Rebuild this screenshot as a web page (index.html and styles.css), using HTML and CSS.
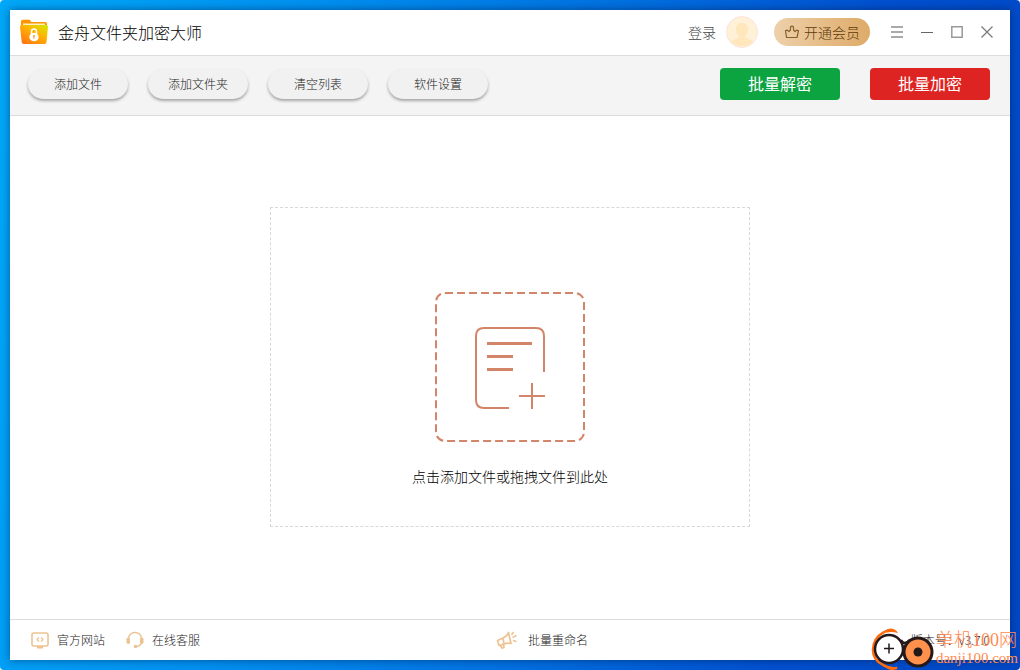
FILE: index.html
```html
<!DOCTYPE html>
<html lang="zh-CN">
<head>
<meta charset="utf-8">
<meta name="viewport" content="width=device-width, initial-scale=1">
<title>金舟文件夹加密大师</title>
<link rel="stylesheet" href="styles.css">
</head>
<body>
<div class="window">
  <header class="titlebar">
    <svg class="logo" viewBox="0 0 28 26" aria-hidden="true">
      <defs>
        <linearGradient id="front" x1="1" y1="0" x2="0.2" y2="1">
          <stop offset="0" stop-color="#d2ea00"/><stop offset="0.45" stop-color="#ffb400"/><stop offset="1" stop-color="#ff7614"/>
        </linearGradient>
      </defs>
      <path fill="#ff9500" d="M1 2.500Q1 0.800 2.600 0.800H9Q10 0.800 10.700 2L11.300 3H25Q27 3 27 5V10H1z"/>
      <path fill="#fff0c4" d="M3 4.500H25V9H3z"/>
      <path fill="url(#front)" d="M0 7.500Q0 6 1.500 6H26.500Q28 6 28 7.500L26.500 23Q26.200 25 24.500 25H3.500Q2 25 1.700 23z"/>
      <path fill="none" stroke="#fff" stroke-width="1.500" d="M11.500 15V12.500Q11.500 10 14 10Q16.500 10 16.500 12.500V15"/>
      <ellipse cx="14" cy="18" rx="4.700" ry="4.300" fill="#fff"/>
      <path fill="#ffa030" d="M14 16a1 1 0 0 1 .5 1.900V20h-1V17.900a1 1 0 0 1 .5-1.900z"/>
    </svg>
    <h1 class="title">金舟文件夹加密大师</h1>
    <a class="login" href="#">登录</a>
    <svg class="avatar" viewBox="0 0 32 32" aria-hidden="true">
      <circle cx="16" cy="16" r="15.500" fill="#fff0d8" stroke="#fde3dc"/>
      <path fill="#ffe6bb" d="M16 7c4 0 6 2.500 6 6 0 3-1 5-3 7v1.500l6 2.500c1 .5 1.500 1 1.500 2C23 29 20 30 16 30S9 29 5.500 26c0-1 .5-1.500 1.500-2l6-2.500V20c-2-2-3-4-3-7 0-3.500 2-6 6-6z"/>
    </svg>
    <button class="vip" type="button">
      <svg class="crown" viewBox="0 0 16 14" aria-hidden="true">
        <path fill="none" stroke="#87602c" stroke-width="1.200" stroke-linejoin="round" d="M2.500 12.500L1.500 5.500L3.500 5.200L5 6.500L6.500 5V2Q8 0.200 9.500 2V5L11 6.500L12.500 5.200L14.500 5.500L13 12.500z"/>
      </svg>
      <span>开通会员</span>
    </button>
    <div class="controls">
      <button class="control" type="button" aria-label="菜单"><svg viewBox="0 0 14 14"><path stroke="#aaa" stroke-width="2" d="M1 2H13M1 7H13M1 12H13"/></svg></button>
      <button class="control" type="button" aria-label="最小化"><svg viewBox="0 0 14 14"><path stroke="#666" d="M1 7.500H13"/></svg></button>
      <button class="control" type="button" aria-label="最大化"><svg viewBox="0 0 14 14"><path fill="none" stroke="#999" stroke-width="1.500" d="M1.800 1.800H12.200V12.200H1.800z"/></svg></button>
      <button class="control" type="button" aria-label="关闭"><svg viewBox="0 0 14 14"><path stroke="#777" stroke-width="1.200" d="M1.500 1.500L12.500 12.500M12.500 1.500L1.500 12.500"/></svg></button>
    </div>
  </header>

  <nav class="toolbar">
    <button class="pill" type="button">添加文件</button>
    <button class="pill" type="button">添加文件夹</button>
    <button class="pill" type="button">清空列表</button>
    <button class="pill" type="button">软件设置</button>
    <div class="actions">
      <button class="action decrypt" type="button">批量解密</button>
      <button class="action encrypt" type="button">批量加密</button>
    </div>
  </nav>

  <main class="workspace">
    <button class="dropzone" type="button">
      <svg class="add-file" viewBox="0 0 150 150" aria-hidden="true">
        <g fill="none" stroke="#d38569" stroke-width="2">
          <rect x="1" y="1" width="148" height="148" rx="9" stroke-dasharray="8 4"/>
          <path d="M74 116H49Q41 116 41 108V44Q41 36 49 36H101Q109 36 109 44V80M97 91V117M84 104H110"/>
          <path stroke-width="3" d="M52 51.500H97M52 64.500H78M52 77.500H78"/>
        </g>
      </svg>
      <span>点击添加文件或拖拽文件到此处</span>
    </button>
  </main>

  <footer class="statusbar">
    <div class="links">
      <a class="link" href="#">
        <svg class="link-icon" viewBox="0 0 20 18" aria-hidden="true">
          <rect x="2" y="2" width="16" height="13" rx="1.500" fill="none" stroke="#ecc391" stroke-width="1.600"/>
          <path fill="none" stroke="#ecc391" stroke-width="1.200" d="M9 6.500L7 8.500L9 10.500M11 6.500L13 8.500L11 10.500"/>
          <path fill="#ecc391" d="M7 15H13V17.500H7z"/>
        </svg>
        官方网站</a>
      <a class="link" href="#">
        <svg class="link-icon" viewBox="0 0 20 18" aria-hidden="true">
          <path fill="none" stroke="#ecc391" stroke-width="1.500" d="M3.500 9V7.500C3.500 4 6.500 1.500 10 1.500S16.500 4 16.500 7.500V9M16.500 12Q15.500 15 11 15.500"/>
          <rect x="1.500" y="6.500" width="3.500" height="6.500" rx="1.700" fill="#ecc391"/>
          <rect x="15" y="6.500" width="3.500" height="6.500" rx="1.700" fill="#ecc391"/>
          <circle cx="10.500" cy="15.500" r="1.800" fill="#ecc391"/>
        </svg>
        在线客服</a>
    </div>
    <a class="link rename" href="#">
      <svg class="horn" viewBox="0 0 22 18" aria-hidden="true">
        <path fill="none" stroke="#ecc391" stroke-width="1.700" stroke-linejoin="round" d="M1.500 9.500L7 7Q11 5.500 12.500 1.500L15 12.500Q11.500 11.500 8 13L3 14.500zM7 7L8 13M4.500 14.500L6 17.200L8 16.500L7.500 13.500"/>
        <path stroke="#ecc391" stroke-width="1.500" d="M15.500 4L17.500 1M16.500 6.500L20.500 4.500M17 9.500L20.500 10.500"/>
      </svg>
      批量重命名</a>
    <span class="version">版本号：v3.7.0</span>
  </footer>
</div>

<div class="watermark">
  <svg class="mark-logo" viewBox="0 0 66 44" aria-hidden="true">
    <path fill="none" stroke="#ff6a0a" stroke-width="2.500" d="M14 6Q3 12 3 24Q3 34 13 39Q19 43 27 42"/>
    <path fill="#ff6a0a" d="M10 9Q14 3 21 2.500Q26 3 28 7Q18 4 10 9zM12 37Q19 42 28 41Q26 44 21 44Q16 43 12 37z"/>
    <circle cx="19" cy="23" r="14" fill="#fff" stroke="#241819" stroke-width="2.500"/>
    <path stroke="#241819" stroke-width="1.500" d="M14 22.500H24M19 17.500V27.500"/>
    <circle cx="48" cy="26" r="14" fill="#ff914c" stroke="#241819" stroke-width="3"/>
    <circle cx="48" cy="26" r="4.500" fill="#241819"/>
    <path fill="none" stroke="#241819" stroke-width="2.500" d="M31 14Q34 20 40 14"/>
  </svg>
  <div class="mark-text"><span class="mark-name">单机100网</span><span class="mark-url">danji100.com</span></div>
</div>
</body>
</html>
```

FILE: styles.css
```css
* { box-sizing: border-box; }

html { background: #fff; }

body {
  margin: 0;
  min-height: 100vh;
  padding: 10px;
  display: flex;
  border-radius: 4px;
  background: linear-gradient(100deg, #00a8f8 0%, #0090f0 28%, #0070e0 55%, #0050cf 78%, #0047c4 100%);
  font-family: "Noto Sans CJK SC", sans-serif;
  font-weight: 300;
  color: #222;
}

button {
  font: inherit;
  color: inherit;
  border: 0;
  padding: 0;
  background: none;
  cursor: pointer;
}

a { color: inherit; text-decoration: none; }
svg { display: block; flex: none; }

.window {
  flex: 1;
  display: flex;
  flex-direction: column;
  background: #fff;
  box-shadow: 0 0 8px rgba(0, 20, 60, 0.5);
}

.titlebar {
  display: flex;
  align-items: center;
  height: 46px;
  padding: 0 16px 2px 10px;
  border-bottom: 1px solid #dcdcdc;
}

.logo { width: 28px; height: 26px; }

.title {
  margin: 0 auto 0 10px;
  font-size: 16px;
  font-weight: 300;
  line-height: 24px;
  color: #000;
}

.login { font-size: 14px; color: #444; }
.avatar { width: 32px; height: 32px; margin: 0 16px 0 10px; }

.vip {
  display: flex;
  align-items: center;
  justify-content: center;
  gap: 4px;
  width: 96px;
  height: 28px;
  border-radius: 14px;
  background: linear-gradient(90deg, #eed0aa, #deab68);
  font-size: 14px;
  color: #5e3a08;
}

.crown { width: 16px; height: 14px; }

.controls { display: flex; gap: 16px; margin-left: 20px; }
.control svg { width: 14px; height: 14px; }

.toolbar {
  display: flex;
  align-items: center;
  gap: 20px;
  height: 60px;
  padding: 0 20px 4px 18px;
  background: #f4f4f4;
  border-bottom: 1px solid #dcdcdc;
}

.pill {
  width: 100px;
  height: 30px;
  border-radius: 15px;
  background: #f1f1f1;
  box-shadow: 0 2px 3px rgba(0, 0, 0, 0.32);
  font-size: 12px;
}

.actions { display: flex; gap: 30px; margin-left: auto; }

.action {
  width: 120px;
  height: 32px;
  padding-bottom: 2px;
  border-radius: 4px;
  font-size: 16px;
  font-weight: 400;
  color: #fff;
}

.decrypt { background: #0ca341; }
.encrypt { background: #dd2422; }

.workspace {
  flex: 1;
  display: flex;
  align-items: center;
  justify-content: center;
  padding-bottom: 2px;
}

.dropzone {
  display: flex;
  flex-direction: column;
  align-items: center;
  gap: 23px;
  width: 480px;
  padding: 84px 0 39px;
  border: 1px dashed #d8d8d8;
  font-size: 14px;
  line-height: 22px;
  color: #000;
}

.add-file { width: 150px; height: 150px; }

.statusbar {
  display: grid;
  grid-template-columns: 1fr auto 1fr;
  align-items: center;
  height: 41px;
  padding: 0 20px 1px;
  border-top: 1px solid #dcdcdc;
  font-size: 12px;
}

.links { display: flex; gap: 20px; }
.link { display: flex; align-items: center; gap: 7px; }
.link-icon { width: 20px; height: 18px; }
.horn { width: 22px; height: 18px; }
.rename { gap: 10px; padding-left: 64px; }
.version { justify-self: end; }

.watermark {
  position: absolute;
  right: 2px;
  bottom: 0;
  display: flex;
  align-items: center;
}

.mark-logo { width: 66px; height: 44px; }
.mark-text { display: flex; flex-direction: column; color: #ff8a50; }
.mark-name {
  font-family: "Liberation Serif", "Noto Sans CJK SC", serif;
  font-size: 18px;
  line-height: 20px;
}
.mark-url { font-family: "Liberation Serif", serif; font-size: 15px; line-height: 16px; }
```
